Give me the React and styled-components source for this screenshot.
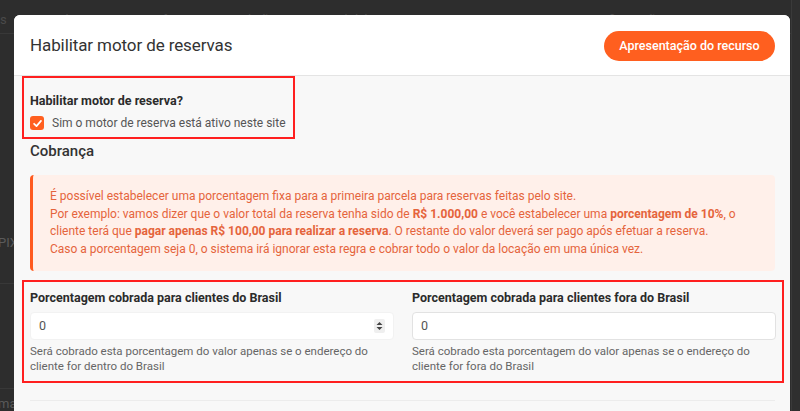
import React from "react";
import styled, { createGlobalStyle } from "styled-components";

const Global = createGlobalStyle`
  html, body { margin: 0; padding: 0; }
  body {
    width: 800px; height: 411px; overflow: hidden;
    background: #2d2d2d;
    font-family: Roboto, "Liberation Sans", sans-serif;
  }
  * { box-sizing: border-box; }
`;

const Backdrop = styled.div`
  width: 800px;
  height: 411px;
  background: #2d2d2d;
  position: relative;
  overflow: hidden;
`;

const NavBar = styled.div`
  display: flex;
  gap: 40px;
  padding: 12px 0 0 0;
  height: 34px;
  border-bottom: 1px solid #383838;
  color: #4a4a4a;
  font-size: 13px;
  white-space: nowrap;
`;

const SideText = styled.div`
  position: absolute;
  left: -2px;
  top: ${(p) => p.$top};
  color: #5a5a5a;
  font-size: 13px;
`;

const SideLine = styled.div`
  position: absolute;
  left: 0;
  width: 14px;
  top: ${(p) => p.$top};
  border-top: 1px solid #383838;
`;

const RightPanel = styled.div`
  position: absolute;
  left: 791px;
  top: 0;
  width: 9px;
  height: 411px;
  border-left: 1px solid #3a3a3a;
  background: #2f2f2f;
`;

const Modal = styled.div`
  position: absolute;
  left: 14px;
  top: 15px;
  width: 776px;
  height: 420px;
  background: #f8f8f8;
  border-radius: 6px 6px 0 0;
  overflow: hidden;
`;

const Header = styled.div`
  height: 61px;
  background: #fff;
  border-bottom: 1px solid #e4e4e4;
  display: flex;
  align-items: center;
  justify-content: space-between;
  padding: 0 15px 0 16px;
`;

const Title = styled.h1`
  margin: 0;
  font-size: 17px;
  font-weight: 400;
  letter-spacing: -0.1px;
  color: #333;
`;

const PillButton = styled.button`
  height: 30px;
  width: 171px;
  padding: 0;
  border: none;
  border-radius: 15px;
  background: #ff5f1f;
  color: #fff;
  font-family: inherit;
  font-size: 12.5px;
  font-weight: 500;
  margin-top: 1px;
`;

const Body = styled.div`
  padding: 0 7px 0 8px;
  display: flex;
  flex-direction: column;
`;

const Highlight = styled.div`
  border: 2.5px solid #ff1f1f;
  padding: ${(p) => p.$pad};
  width: ${(p) => p.$width};
  margin-top: ${(p) => p.$top || "0"};
`;

const BoldLabel = styled.div`
  font-size: 12.5px;
  line-height: 15px;
  font-weight: 700;
  color: #2b2b2b;
`;

const CheckRow = styled.label`
  display: flex;
  align-items: center;
  gap: 8px;
  margin-top: 8px;
  font-size: 12px;
  line-height: 14px;
  white-space: nowrap;
  color: #555;
`;

const CheckBox = styled.span`
  width: 14px;
  height: 14px;
  border-radius: 3px;
  background: #ff5f1f;
  display: inline-flex;
  align-items: center;
  justify-content: center;
  flex: none;
`;

const SectionTitle = styled.h2`
  margin: 3px 0 0 8px;
  font-size: 15px;
  line-height: 18px;
  font-weight: 500;
  color: #333;
`;

const Alert = styled.div`
  margin: 15px 8px 0 8px;
  background: #fff0ea;
  border-left: 3px solid #ff5a1f;
  border-radius: 4px;
  padding: 13px 16px 12px 17px;
  color: #e5643c;
  font-size: 12px;
  line-height: 17.7px;
  height: 96px;
  b { font-weight: 700; }
`;

const Grid = styled.div`
  display: grid;
  grid-template-columns: 1fr 1fr;
  column-gap: 18px;
`;

const Field = styled.div`
  display: flex;
  flex-direction: column;
`;

const InputWrap = styled.div`
  margin-top: 7px;
  height: 28px;
  background: #fff;
  border: 1px solid ${(p) => (p.$bordered ? "#e2e2e2" : "#f2f2f2")};
  border-radius: 4px;
  display: flex;
  align-items: center;
  justify-content: space-between;
  padding: 0 8px 0 8px;
  font-size: 12.5px;
  color: #555;
`;

const Spinner = styled.span`
  width: 11px;
  height: 14px;
  background: #efefef;
  border-radius: 2px;
  display: inline-flex;
  align-items: center;
  justify-content: center;
`;

const Help = styled.div`
  margin-top: 4px;
  font-size: 11.5px;
  line-height: 15.5px;
  color: #666;
`;

const Divider = styled.div`
  margin: 17px 8px 0 8px;
  border-top: 1px solid #ececec;
`;

export default function App() {
  return (
    <>
      <Global />
      <Backdrop>
        <NavBar>
          <span>s</span>
          <span>Anúncios</span>
          <span>Tarifas</span>
          <span>Condições</span>
          <span>Imobiliária</span>
          <span>Financeiro</span>
          <span>Site</span>
          <span>Configurações</span>
        </NavBar>
        <SideText $top="235px">PIX</SideText>
        <SideLine $top="283px" />
        <SideLine $top="388px" />
        <SideText $top="396px">mas</SideText>
        <RightPanel />
        <Modal>
          <Header>
            <Title>Habilitar motor de reservas</Title>
            <PillButton>Apresentação do recurso</PillButton>
          </Header>
          <Body>
            <Highlight $pad="15px 6px 7px 6px" $width="273px">
              <BoldLabel>Habilitar motor de reserva?</BoldLabel>
              <CheckRow>
                <CheckBox>
                  <svg width="11" height="11" viewBox="0 0 12 12">
                    <path d="M2.3 6.3 L4.9 8.8 L9.8 3.2" fill="none" stroke="#fff" strokeWidth="1.9" strokeLinecap="round" strokeLinejoin="round" />
                  </svg>
                </CheckBox>
                Sim o motor de reserva está ativo neste site
              </CheckRow>
            </Highlight>
            <SectionTitle>Cobrança</SectionTitle>
            <Alert>
              É possível estabelecer uma porcentagem fixa para a primeira parcela para reservas feitas pelo site.<br />
              Por exemplo: vamos dizer que o valor total da reserva tenha sido de <b>R$ 1.000,00</b> e você estabelecer uma <b>porcentagem de 10%</b>, o cliente terá que <b>pagar apenas R$ 100,00 para realizar a reserva</b>. O restante do valor deverá ser pago após efetuar a reserva.<br />
              Caso a porcentagem seja 0, o sistema irá ignorar esta regra e cobrar todo o valor da locação em uma única vez.
            </Alert>
            <Highlight $pad="7.5px 6px 6px 6px" $width="762px" $top="9px">
              <Grid>
                <Field>
                  <BoldLabel>Porcentagem cobrada para clientes do Brasil</BoldLabel>
                  <InputWrap>
                    <span>0</span>
                    <Spinner>
                      <svg width="7" height="10" viewBox="0 0 7 10">
                        <path d="M0.5 4 L3.5 1 L6.5 4 Z M0.5 6 L3.5 9 L6.5 6 Z" fill="#444" />
                      </svg>
                    </Spinner>
                  </InputWrap>
                  <Help>Será cobrado esta porcentagem do valor apenas se o endereço do cliente for dentro do Brasil</Help>
                </Field>
                <Field>
                  <BoldLabel>Porcentagem cobrada para clientes fora do Brasil</BoldLabel>
                  <InputWrap $bordered>
                    <span>0</span>
                  </InputWrap>
                  <Help>Será cobrado esta porcentagem do valor apenas se o endereço do cliente for fora do Brasil</Help>
                </Field>
              </Grid>
            </Highlight>
            <Divider />
          </Body>
        </Modal>
      </Backdrop>
    </>
  );
}
